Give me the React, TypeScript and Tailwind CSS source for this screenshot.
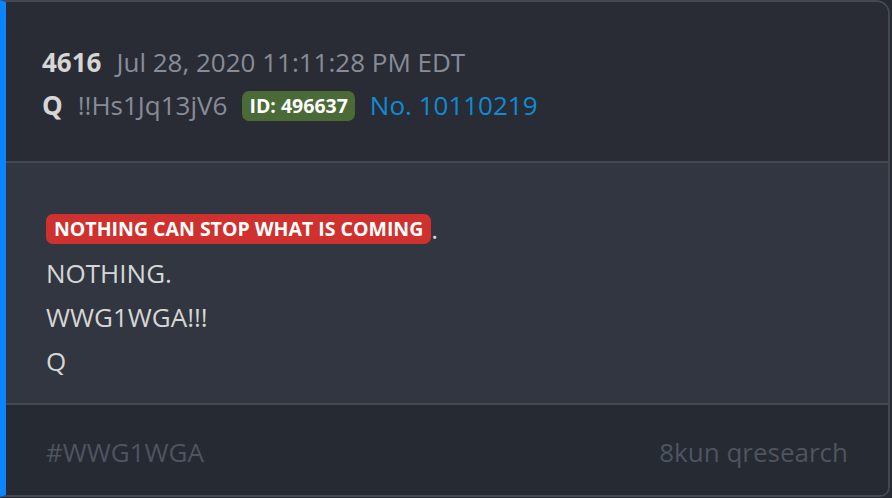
import React from "react";

export default function App() {
  return (
    <div
      className="w-[892px] h-[498px] bg-[#262a32]"
      style={{ fontFamily: '"Open Sans", "Noto Sans", sans-serif' }}
    >
      <div className="h-[497px] w-[890px] flex flex-col border-2 border-[#434852] border-l-[6px] border-l-[#0a84ff] rounded-tr-[14px] rounded-br-[10px] overflow-hidden">
        <div className="bg-[#292c35] pl-[36px] pt-[39px] pb-[34px] text-[26px] leading-[43px]">
          <div className="flex items-center">
            <span className="font-bold text-[#d6d6d6]">4616</span>
            <span className="ml-[15px] text-[#878c98]">Jul 28, 2020 11:11:28 PM EDT</span>
          </div>
          <div className="flex items-center">
            <span className="font-bold text-[#d6d6d6]">Q</span>
            <span className="ml-[15px] text-[#878c98]">!!Hs1Jq13jV6</span>
            <span className="ml-[15px] bg-[#4a6a37] text-white font-bold text-[19.5px] leading-[30px] px-[7px] rounded-[7px]">
              ID: 496637
            </span>
            <span className="ml-[15px] text-[#0f8bd4]">No. 10110219</span>
          </div>
        </div>
        <div className="h-[2px] bg-[#434852]" />
        <div className="bg-[#313640] pl-[40px] pt-[44px] pb-[18px] text-[26px] leading-[44px] text-[#d6d6d6] flex-1">
          <div className="flex items-center">
            <span className="bg-[#cf312e] text-white font-bold text-[19.5px] leading-[30px] px-[8px] rounded-[7px]">
              NOTHING CAN STOP WHAT IS COMING
            </span>
            <span>.</span>
          </div>
          <div>NOTHING.</div>
          <div>WWG1WGA!!!</div>
          <div>Q</div>
        </div>
        <div className="h-[2px] bg-[#434852]" />
        <div className="bg-[#262a32] pl-[40px] pr-[40px] pt-[26px] pb-[21px] text-[26px] leading-[43px] text-[#4f5461] flex justify-between">
          <span>#WWG1WGA</span>
          <span>8kun qresearch</span>
        </div>
      </div>
    </div>
  );
}
